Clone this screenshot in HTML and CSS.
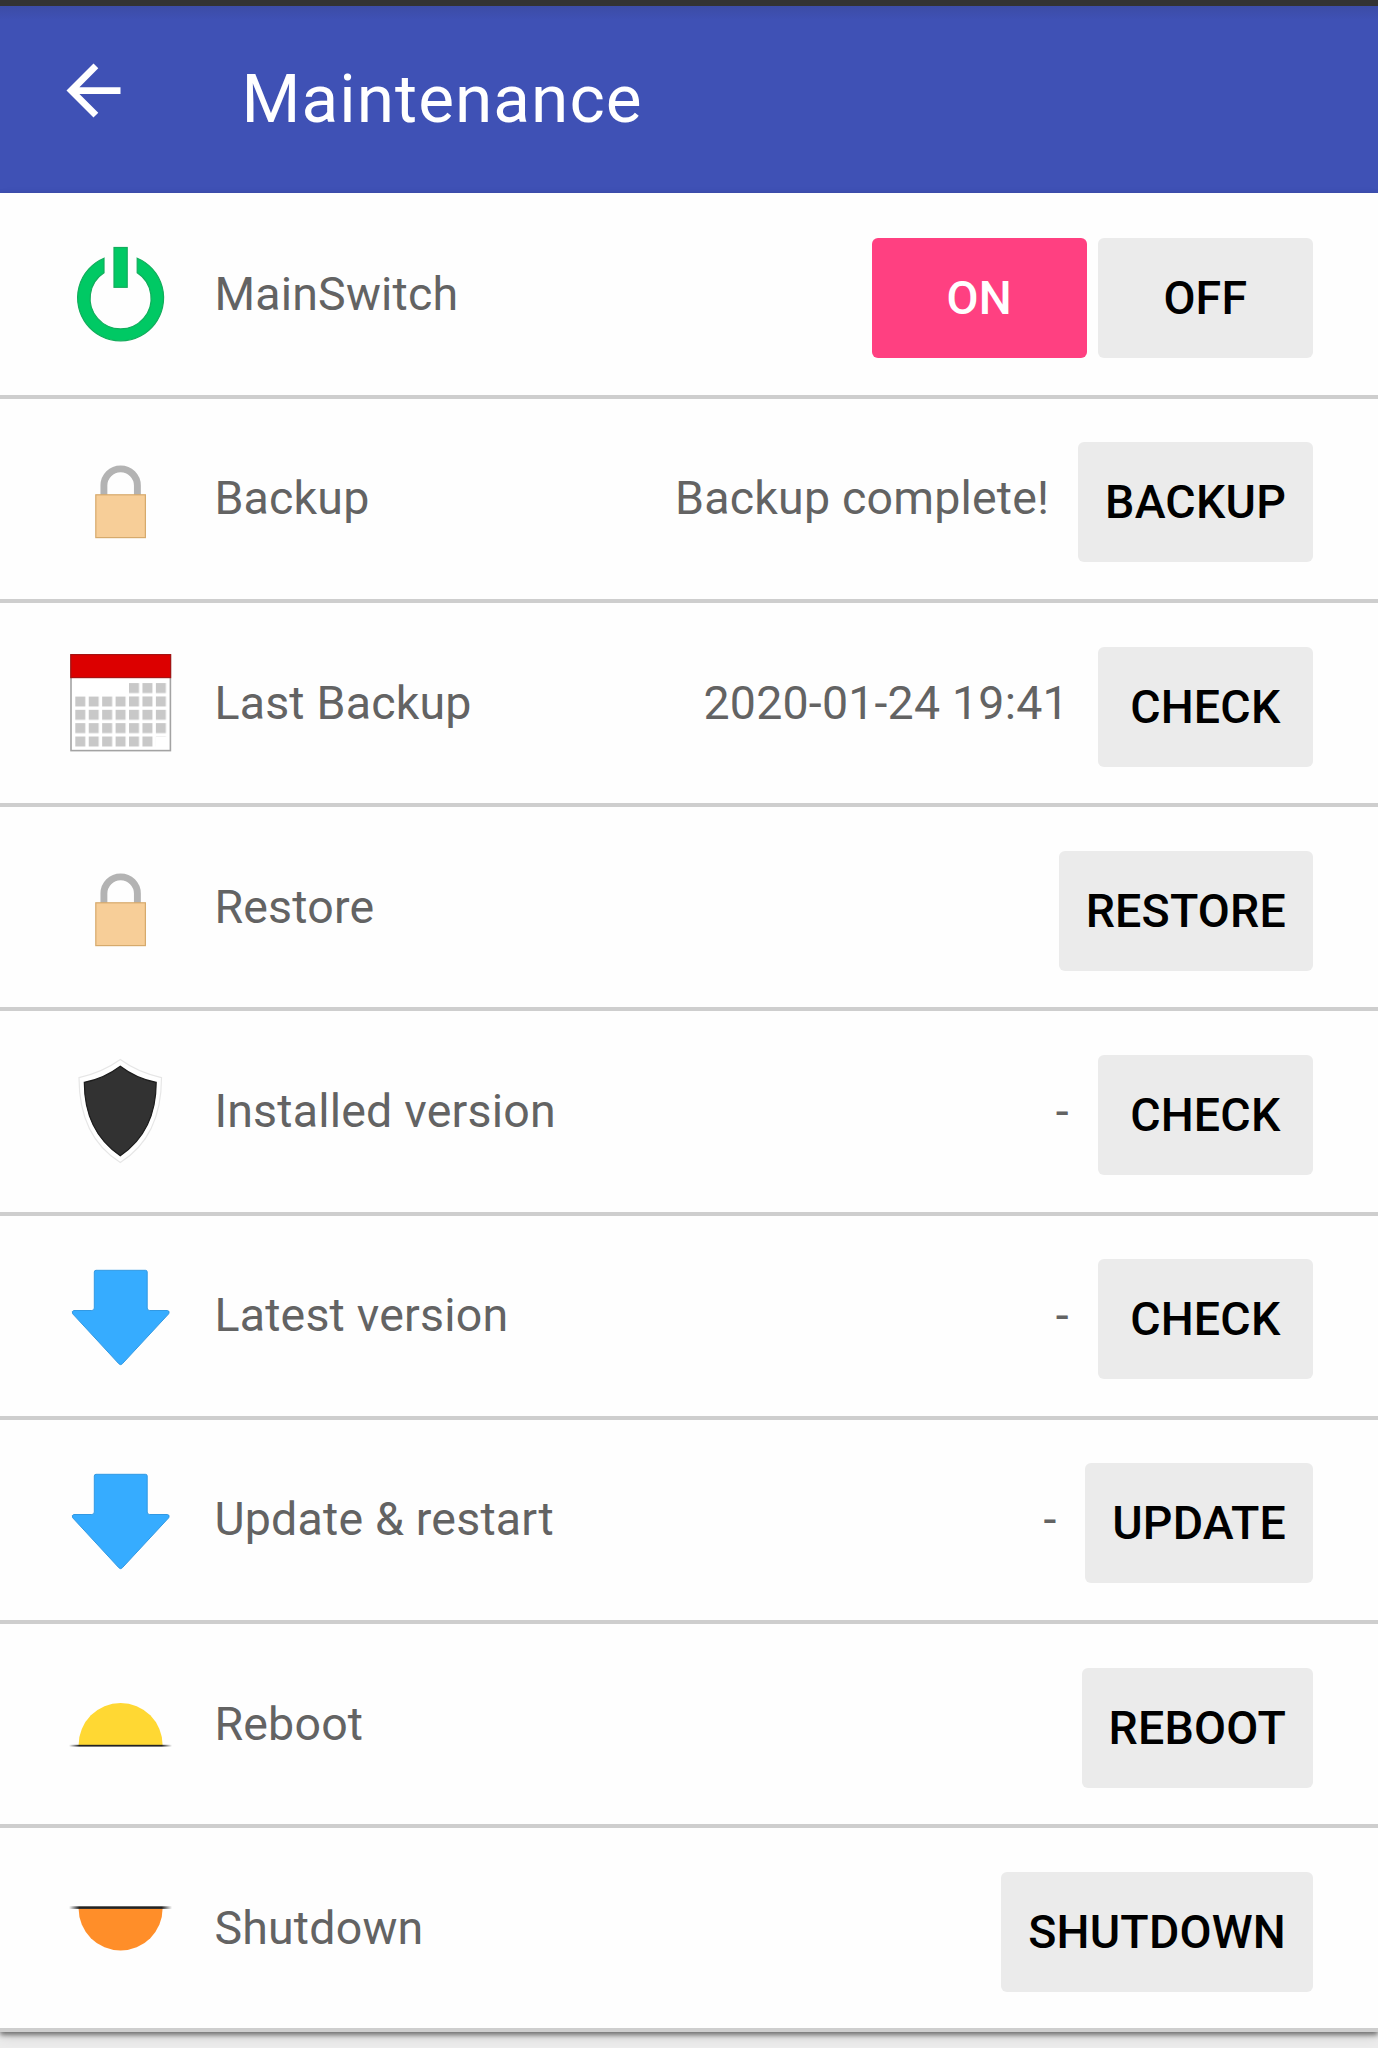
FILE: index.html
```html
<!DOCTYPE html>
<html lang="en">
<head>
<meta charset="utf-8">
<title>Maintenance</title>
<link rel="stylesheet" href="styles.css">
</head>
<body>
<svg class="defs" width="0" height="0" aria-hidden="true">
  <defs>
    <linearGradient id="horizon" x1="69" x2="172" y1="0" y2="0" gradientUnits="userSpaceOnUse">
      <stop offset="0" stop-color="#222" stop-opacity="0"/>
      <stop offset=".1" stop-color="#222"/>
      <stop offset=".9" stop-color="#222"/>
      <stop offset="1" stop-color="#222" stop-opacity="0"/>
    </linearGradient>
    <pattern id="days" x="75.3" y="80.1" width="13.43" height="13.35" patternUnits="userSpaceOnUse">
      <rect width="10" height="10" fill="#c8c8c8"/>
    </pattern>
    <symbol id="lock" viewBox="69 0 103 200">
      <path d="M103.9 96V86.6a16.75 16.75 0 0 1 33.5 0V96" fill="none" stroke="#b3b3b3" stroke-width="6.9"/>
      <rect x="95.8" y="95.8" width="49.6" height="42.8" fill="#f7ce98" stroke="#d6aa6c" stroke-width="1.2"/>
    </symbol>
    <symbol id="down" viewBox="69 0 103 200">
      <path d="M96 54.3H145.5q1.7 0 1.7 1.7V92q0 2.5 2.5 2.5H167.5q2.6 0.5 1.2 3.3L122.3 147.8q-1.7 1.7-3.4 0L72.7 97.8q-1.4-2.8 1.2-3.3H91.8q2.5 0 2.5-2.5V56q0-1.7 1.7-1.7z" fill="#36acff" stroke="#3299e3" stroke-width="1"/>
    </symbol>
  </defs>
</svg>

<header class="appbar">
  <svg class="back" viewBox="0 0 24 24"><path d="M20 11H7.83l5.59-5.59L12 4l-8 8 8 8 1.41-1.41L7.83 13H20v-2z" fill="#fff"/></svg>
  <h1 class="title">Maintenance</h1>
</header>

<main class="list">
  <div class="row">
    <svg class="icon" viewBox="69 0 103 200">
      <path d="M104 63.2A43 43 0 1 0 137.2 63.2V77.8A30.5 30.5 0 1 1 104 77.8z" fill="#00c964" stroke="#12ad5c" stroke-width="1.2"/>
      <rect x="114" y="52.5" width="13.2" height="39.8" fill="#00c964" stroke="#12ad5c" stroke-width="1.2"/>
    </svg>
    <span class="label">MainSwitch</span>
    <button class="btn active">ON</button>
    <button class="btn">OFF</button>
  </div>
  <div class="row">
    <svg class="icon"><use href="#lock"/></svg>
    <span class="label">Backup</span>
    <span class="value">Backup complete!</span>
    <button class="btn">BACKUP</button>
  </div>
  <div class="row">
    <svg class="icon" viewBox="69 0 103 200">
      <rect x="71" y="52" width="99.4" height="95.6" fill="#fff" stroke="#a3a3a3" stroke-width="1.6"/>
      <rect x="70.8" y="51.6" width="99.8" height="23" fill="#dc0000" stroke="#a51212" stroke-width="1.2"/>
      <path d="M129 80H168V133.4H155.5V146H75V93.3H129z" fill="url(#days)"/>
    </svg>
    <span class="label">Last Backup</span>
    <span class="value">2020-01-24 19:41</span>
    <button class="btn">CHECK</button>
  </div>
  <div class="row">
    <svg class="icon"><use href="#lock"/></svg>
    <span class="label">Restore</span>
    <button class="btn">RESTORE</button>
  </div>
  <div class="row">
    <svg class="icon" viewBox="69 0 103 200">
      <path d="M120.3 48.6Q138.5 61.8 161.5 66.6C161.5 103 150 133 120.3 151.5C90.5 133 79 103 79 66.6Q102 61.8 120.3 48.6z" fill="#fff" stroke="#e6e6e6" stroke-width="1.2"/>
      <path d="M120.3 55.3Q137 68 156.2 71.3C156.2 103 145 128 120.3 144.7C95.5 128 84.3 103 84.3 71.3Q103.5 68 120.3 55.3z" fill="#323232" stroke="#1c1c1c" stroke-width="1.2"/>
    </svg>
    <span class="label">Installed version</span>
    <span class="value">-</span>
    <button class="btn">CHECK</button>
  </div>
  <div class="row">
    <svg class="icon"><use href="#down"/></svg>
    <span class="label">Latest version</span>
    <span class="value">-</span>
    <button class="btn">CHECK</button>
  </div>
  <div class="row">
    <svg class="icon"><use href="#down"/></svg>
    <span class="label">Update &amp; restart</span>
    <span class="value">-</span>
    <button class="btn">UPDATE</button>
  </div>
  <div class="row">
    <svg class="icon" viewBox="69 0 103 200">
      <path d="M78.6 121A42 42 0 0 1 162.6 121z" fill="#ffd833"/>
      <rect x="69" y="120.8" width="103" height="1.8" fill="url(#horizon)"/>
    </svg>
    <span class="label">Reboot</span>
    <button class="btn">REBOOT</button>
  </div>
  <div class="row">
    <svg class="icon" viewBox="69 0 103 200">
      <path d="M78.6 80.5A42 42 0 0 0 162.6 80.5z" fill="#ff8e29"/>
      <rect x="69" y="78.3" width="103" height="2.6" fill="url(#horizon)"/>
    </svg>
    <span class="label">Shutdown</span>
    <button class="btn">SHUTDOWN</button>
  </div>
</main>
</body>
</html>
```

FILE: styles.css
```css
* { box-sizing: border-box; }

body {
  margin: 0;
  height: 2048px;
  overflow: hidden;
  background: #ededed;
  font-family: Roboto, "Liberation Sans", sans-serif;
}

.defs { display: block; height: 0; }

.appbar {
  display: flex;
  height: 193px;
  padding-left: 53px;
  border-top: 6px solid #333;
  background: linear-gradient(#3c4ca6, #3f51b5 14px);
}

.back {
  width: 81px;
  height: 81px;
  margin-top: 44px;
}

.title {
  margin: 0 0 0 107.5px;
  padding-top: 53px;
  font-size: 67.5px;
  font-weight: 400;
  line-height: 80px;
  letter-spacing: 1.05px;
  color: #fff;
}

.list {
  padding-top: 1.6px;
  background: #fefefe;
  box-shadow: 0 3px 5px rgba(0, 0, 0, .5), 0 6px 14px rgba(0, 0, 0, .08);
}

.row {
  display: flex;
  align-items: center;
  height: 204.2px;
  padding: 0 65.2px 0 69px;
  border-bottom: 4px solid #cecece;
}

.icon {
  flex: none;
  width: 103px;
  height: 200px;
}

.label,
.value {
  padding-bottom: 1px;
  font-size: 46.5px;
  line-height: 56px;
  letter-spacing: .2px;
  white-space: nowrap;
  color: #636363;
}

.label {
  flex: 1;
  margin-left: 42.4px;
}

.value { margin-right: 18px; }

.btn {
  min-width: 215px;
  height: 120px;
  margin: 7px 0 0 11px;
  padding: 0 26.8px;
  border: 0;
  border-radius: 6px;
  background: #ebebeb;
  font: 500 46.5px/56px Roboto, "Liberation Sans", sans-serif;
  letter-spacing: .2px;
  color: #000;
}

.btn.active {
  background: #ff4081;
  color: #fff;
}
```
